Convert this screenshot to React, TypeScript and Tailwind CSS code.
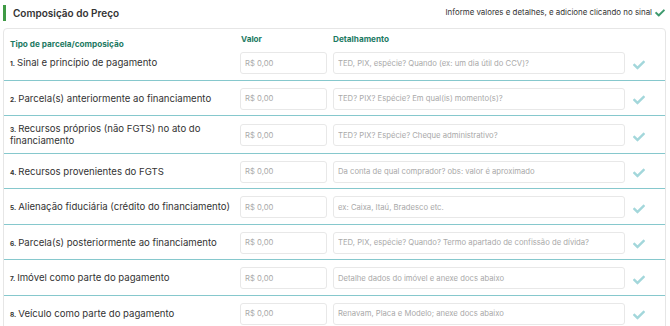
import { FaCheck } from 'react-icons/fa';

const rows = [
  { n: '1.', label: 'Sinal e princípio de pagamento', hint: 'TED, PIX, espécie? Quando (ex: um dia útil do CCV)?' },
  { n: '2.', label: 'Parcela(s) anteriormente ao financiamento', hint: 'TED? PIX? Espécie? Em qual(is) momento(s)?' },
  { n: '3.', label: 'Recursos próprios (não FGTS) no ato do financiamento', hint: 'TED? PIX? Espécie? Cheque administrativo?' },
  { n: '4.', label: 'Recursos provenientes do FGTS', hint: 'Da conta de qual comprador? obs: valor é aproximado' },
  { n: '5.', label: 'Alienação fiduciária (crédito do financiamento)', hint: 'ex: Caixa, Itaú, Bradesco etc.' },
  { n: '6.', label: 'Parcela(s) posteriormente ao financiamento', hint: 'TED, PIX, espécie? Quando? Termo apartado de confissão de dívida?' },
  { n: '7.', label: 'Imóvel como parte do pagamento', hint: 'Detalhe dados do imóvel e anexe docs abaixo' },
  { n: '8.', label: 'Veículo como parte do pagamento', hint: 'Renavam, Placa e Modelo; anexe docs abaixo' },
];

const grid = 'grid grid-cols-[224px_87px_292px_1fr] gap-x-[6px] pl-[6px]';

export default function App() {
  return (
    <div className="w-[670px] h-[326px] overflow-hidden bg-white text-[#333] font-['Inter','Liberation_Sans',sans-serif]">
      {/* cabeçalho */}
      <div className="flex items-center justify-between h-[28px] pl-[3px] pr-[5px] pb-[2px]">
        <div className="flex items-center h-[16px] border-l-[3px] border-[#3f9a45] pl-[7px]">
          <span className="text-[10px] font-semibold">Composição do Preço</span>
        </div>
        <div className="flex items-center gap-[3px] text-[7.9px]">
          <span>Informe valores e detalhes, e adicione clicando no sinal</span>
          <FaCheck className="w-[10px] h-[10px] text-[#3e9a6e]" />
        </div>
      </div>

      <div className="mx-[3px] w-[663px] border border-[#e6e6e6] rounded-[4px]">
        <div className={`${grid} h-[20px] text-[8.2px] font-bold text-[#1d7a62] leading-[10px]`}>
          <span className="self-end">Tipo de parcela/composição</span>
          <span className="self-start mt-[5px] pl-[1px]">Valor</span>
          <span className="self-start mt-[5px]">Detalhamento</span>
          <span />
        </div>

        {rows.map((r, i) => (
          <div
            key={r.n}
            className={`${grid} items-center ${i === 0 ? 'pt-[3px]' : 'pt-[7px]'} pb-[5.5px] border-b border-[#86c8cd]`}
          >
            <p className="text-[9.6px] leading-[12px] pr-[4px]">
              <b className="text-[6.5px] leading-none mr-[2px]">{r.n}</b>
              {r.label}
            </p>
            <input
              placeholder="R$ 0,00"
              className="h-[22px] w-full border border-[#e8e8e8] rounded-[3px] px-[4px] text-[7.7px] placeholder:text-[#a9a9a9] outline-none"
            />
            <input
              placeholder={r.hint}
              className="h-[22px] w-full border border-[#e8e8e8] rounded-[3px] px-[4px] text-[7.7px] placeholder:text-[#a9a9a9] outline-none"
            />
            <div className="pl-[1px] pt-[3px]">
              <FaCheck className="w-[14px] h-[12px] text-[#a3d7db]" />
            </div>
          </div>
        ))}
      </div>
    </div>
  );
}
